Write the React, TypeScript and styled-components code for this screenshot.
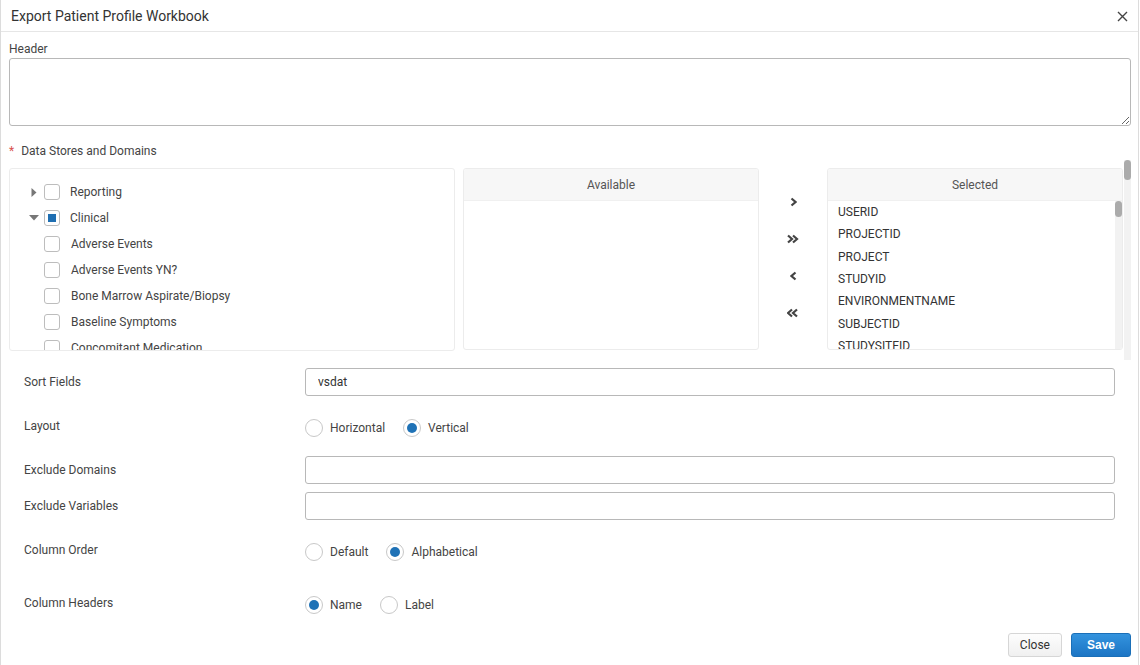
import React from "react";
import styled, { createGlobalStyle } from "styled-components";

const Global = createGlobalStyle`
  html, body { margin: 0; padding: 0; background: #fff; }
  body { font-family: Roboto, "Liberation Sans", Arial, sans-serif; font-size: 12px; color: #444; }
  * { box-sizing: border-box; }
`;

const Dialog = styled.div`
  width: 1139px;
  height: 665px;
  border-left: 1px solid #dcdcdc;
  border-right: 1px solid #dcdcdc;
  background: #fff;
  display: flex;
  flex-direction: column;
`;

const TitleBar = styled.div`
  height: 32px;
  border-bottom: 1px solid #e6e6e6;
  display: flex;
  align-items: center;
  justify-content: space-between;
  padding: 0 10px 0 10px;
`;

const Title = styled.div`
  font-size: 14px;
  color: #333;
  padding-top: 1px;
`;

const CloseX = styled.button`
  border: none;
  background: none;
  padding: 0;
  width: 12px;
  height: 12px;
  display: flex;
  align-items: center;
  justify-content: center;
  cursor: pointer;
  margin-top: 1px;
`;

const Body = styled.div`
  padding: 9px 7px 0 8px;
  display: flex;
  flex-direction: column;
  flex: 1;
`;

const FieldLabel = styled.div`
  font-size: 12px;
  color: #444;
  line-height: 16px;
  margin-bottom: 1px;
`;

const HeaderArea = styled.textarea`
  display: block;
  width: 100%;
  height: 68px;
  border: 1px solid #b8b8b8;
  border-radius: 3px;
  resize: vertical;
  font-family: inherit;
  font-size: 12px;
  padding: 6px 8px;
  outline: none;
`;

const RequiredLabel = styled.div`
  margin-top: 17px;
  line-height: 16px;
  color: #444;
  display: flex;
  gap: 7px;
`;

const Star = styled.span`
  color: #d9534f;
`;

const TransferArea = styled.div`
  margin-top: 1px;
  height: 200px;
  display: flex;
  gap: 1px;
`;

const TransferContent = styled.div`
  flex: 1;
  padding-top: 8px;
  display: flex;
  align-items: flex-start;
  overflow: hidden;
`;

const ScrollTrack = styled.div<{ $h: number }>`
  width: 7px;
  height: ${(p) => p.$h}px;
  background: #f2f2f2;
  flex: none;
`;

const ScrollThumb = styled.div<{ $h: number }>`
  height: ${(p) => p.$h}px;
  background: #ababab;
  border-radius: 4px;
`;

const TreePanel = styled.div`
  width: 446px;
  height: 183px;
  border: 1px solid #ececec;
  border-radius: 3px;
  padding-top: 10px;
  padding-left: 18px;
  overflow: hidden;
  flex: none;
`;

const TreeRow = styled.div`
  height: 26px;
  display: flex;
  align-items: center;
`;

const Caret = styled.span`
  width: 12px;
  height: 12px;
  display: flex;
  align-items: center;
  justify-content: center;
  flex: none;
`;

const Check = styled.span`
  width: 16px;
  height: 16px;
  border: 1px solid #bdbdbd;
  border-radius: 3px;
  margin-left: 4px;
  display: flex;
  align-items: center;
  justify-content: center;
  flex: none;
  background: #fff;
`;

const Partial = styled.span`
  width: 8px;
  height: 8px;
  background: #1f6fb2;
`;

const TreeText = styled.span<{ $child?: boolean }>`
  margin-left: ${(p) => (p.$child ? 11 : 10)}px;
  color: #444;
  white-space: nowrap;
`;

const ListPanel = styled.div`
  width: 296px;
  height: 182px;
  border: 1px solid #ececec;
  border-radius: 3px;
  overflow: hidden;
  display: flex;
  flex-direction: column;
  flex: none;
  margin-left: 8px;
  &:last-child { margin-left: 0; }
`;

const ListHeader = styled.div`
  height: 32px;
  background: #f7f7f7;
  border-bottom: 1px solid #f0f0f0;
  display: flex;
  align-items: center;
  justify-content: center;
  color: #555;
  flex: none;
`;

const ListBody = styled.div`
  flex: 1;
  display: flex;
  overflow: hidden;
`;

const Items = styled.div`
  flex: 1;
  padding-left: 10px;
  overflow: hidden;
`;

const Item = styled.div`
  height: 22.35px;
  line-height: 22.35px;
  color: #333;
  white-space: nowrap;
`;

const Arrows = styled.div`
  width: 68px;
  flex: none;
  padding-top: 15px;
  display: flex;
  flex-direction: column;
  align-items: center;
`;

const ArrowBtn = styled.button`
  height: 37px;
  width: 30px;
  border: none;
  background: none;
  padding: 0;
  display: flex;
  align-items: center;
  justify-content: center;
  cursor: pointer;
`;

const Form = styled.div`
  padding-left: 15px;
  padding-right: 16px;
  display: flex;
  flex-direction: column;
`;

const Row = styled.div<{ $mt: number }>`
  margin-top: ${(p) => p.$mt}px;
  height: 28px;
  display: flex;
  align-items: center;
`;

const RowLabel = styled.div<{ $lift?: boolean }>`
  width: 281px;
  flex: none;
  color: #444;
  position: relative;
  top: ${(p) => (p.$lift ? -2 : 0)}px;
`;

const TextInput = styled.input`
  flex: 1;
  height: 28px;
  border: 1px solid #b8b8b8;
  border-radius: 3px;
  padding: 0 12px;
  font-family: inherit;
  font-size: 12px;
  color: #333;
  outline: none;
`;

const RadioGroup = styled.div`
  display: flex;
  align-items: center;
`;

const RadioOption = styled.label`
  display: flex;
  align-items: center;
  margin-right: 18px;
  color: #444;
  cursor: pointer;
`;

const RadioCircle = styled.span<{ $on?: boolean }>`
  width: 18px;
  height: 18px;
  border-radius: 50%;
  border: 1px solid #c8c8c8;
  display: flex;
  align-items: center;
  justify-content: center;
  margin-right: 7px;
  background: #fff;
  &::after {
    content: "";
    width: 10px;
    height: 10px;
    border-radius: 50%;
    background: ${(p) => (p.$on ? "#1f72b6" : "transparent")};
  }
`;

const Footer = styled.div`
  margin-top: 14px;
  display: flex;
  justify-content: flex-end;
  gap: 9px;
`;

const Button = styled.button<{ $primary?: boolean }>`
  height: 24px;
  padding: 0 ${(p) => (p.$primary ? 15 : 11)}px;
  border-radius: 3px;
  font-family: ${(p) => (p.$primary ? '"Liberation Sans", Arial, sans-serif' : 'inherit')};
  font-size: 12px;
  font-weight: ${(p) => (p.$primary ? 700 : 400)};
  color: ${(p) => (p.$primary ? "#fff" : "#333")};
  border: 1px solid ${(p) => (p.$primary ? "#1a6fb8" : "#d6d6d6")};
  background: ${(p) =>
    p.$primary
      ? "linear-gradient(#3393de, #1c75c4)"
      : "linear-gradient(#fdfdfd, #f0f0f0)"};
  cursor: pointer;
`;

const Chevron = ({ dir, double }: { dir: "l" | "r"; double?: boolean }) => {
  const pts = (x: number) =>
    dir === "r" ? `${x},1.5 ${x + 4},5 ${x},8.5` : `${x + 4},1.5 ${x},5 ${x + 4},8.5`;
  return (
    <svg width={double ? 12 : 7} height="10" viewBox={double ? "0 0 12 10" : "0 0 7 10"}>
      <polyline points={pts(double ? 1 : 1.5)} fill="none" stroke="#444" strokeWidth="2.2" />
      {double && <polyline points={pts(6)} fill="none" stroke="#444" strokeWidth="2.2" />}
    </svg>
  );
};

const selected = [
  "USERID", "PROJECTID", "PROJECT", "STUDYID", "ENVIRONMENTNAME", "SUBJECTID", "STUDYSITEID",
  "SITEID", "SITE", "SITENUMBER", "SITEGROUP", "INSTANCEID", "INSTANCENAME",
];

const children = [
  "Adverse Events",
  "Adverse Events YN?",
  "Bone Marrow Aspirate/Biopsy",
  "Baseline Symptoms",
  "Concomitant Medication",
  "Demographics",
];

export default function App() {
  return (
    <>
      <Global />
      <Dialog>
        <TitleBar>
          <Title>Export Patient Profile Workbook</Title>
          <CloseX aria-label="close">
            <svg width="11" height="11" viewBox="0 0 11 11">
              <path d="M1 1 L10 10 M10 1 L1 10" stroke="#444" strokeWidth="1.4" />
            </svg>
          </CloseX>
        </TitleBar>
        <Body>
          <FieldLabel>Header</FieldLabel>
          <HeaderArea />
          <RequiredLabel>
            <Star>*</Star>
            <span>Data Stores and Domains</span>
          </RequiredLabel>
          <TransferArea>
            <TransferContent>
              <TreePanel>
                <TreeRow>
                  <Caret>
                    <svg width="6" height="9" viewBox="0 0 6 9">
                      <path d="M0.5 0 L5.5 4.5 L0.5 9 Z" fill="#777" />
                    </svg>
                  </Caret>
                  <Check />
                  <TreeText>Reporting</TreeText>
                </TreeRow>
                <TreeRow>
                  <Caret>
                    <svg width="10" height="6" viewBox="0 0 10 6">
                      <path d="M0 0 L10 0 L5 5.5 Z" fill="#777" />
                    </svg>
                  </Caret>
                  <Check>
                    <Partial />
                  </Check>
                  <TreeText>Clinical</TreeText>
                </TreeRow>
                {children.map((c) => (
                  <TreeRow key={c}>
                    <Caret />
                    <Check />
                    <TreeText $child>{c}</TreeText>
                  </TreeRow>
                ))}
              </TreePanel>
              <ListPanel>
                <ListHeader>Available</ListHeader>
                <ListBody />
              </ListPanel>
              <Arrows>
                <ArrowBtn><Chevron dir="r" /></ArrowBtn>
                <ArrowBtn><Chevron dir="r" double /></ArrowBtn>
                <ArrowBtn><Chevron dir="l" /></ArrowBtn>
                <ArrowBtn><Chevron dir="l" double /></ArrowBtn>
              </Arrows>
              <ListPanel>
                <ListHeader>Selected</ListHeader>
                <ListBody>
                  <Items>
                    {selected.map((s) => (
                      <Item key={s}>{s}</Item>
                    ))}
                  </Items>
                  <ScrollTrack $h={149}>
                    <ScrollThumb $h={16} />
                  </ScrollTrack>
                </ListBody>
              </ListPanel>
            </TransferContent>
            <ScrollTrack $h={200}>
              <ScrollThumb $h={20} />
            </ScrollTrack>
          </TransferArea>
          <Form>
            <Row $mt={8}>
              <RowLabel>Sort Fields</RowLabel>
              <TextInput defaultValue="vsdat" />
            </Row>
            <Row $mt={18}>
              <RowLabel $lift>Layout</RowLabel>
              <RadioGroup>
                <RadioOption><RadioCircle />Horizontal</RadioOption>
                <RadioOption><RadioCircle $on />Vertical</RadioOption>
              </RadioGroup>
            </Row>
            <Row $mt={14}>
              <RowLabel>Exclude Domains</RowLabel>
              <TextInput />
            </Row>
            <Row $mt={8}>
              <RowLabel>Exclude Variables</RowLabel>
              <TextInput />
            </Row>
            <Row $mt={18}>
              <RowLabel $lift>Column Order</RowLabel>
              <RadioGroup>
                <RadioOption><RadioCircle />Default</RadioOption>
                <RadioOption><RadioCircle $on />Alphabetical</RadioOption>
              </RadioGroup>
            </Row>
            <Row $mt={25}>
              <RowLabel $lift>Column Headers</RowLabel>
              <RadioGroup>
                <RadioOption><RadioCircle $on />Name</RadioOption>
                <RadioOption><RadioCircle />Label</RadioOption>
              </RadioGroup>
            </Row>
          </Form>
          <Footer>
            <Button>Close</Button>
            <Button $primary>Save</Button>
          </Footer>
        </Body>
      </Dialog>
    </>
  );
}
